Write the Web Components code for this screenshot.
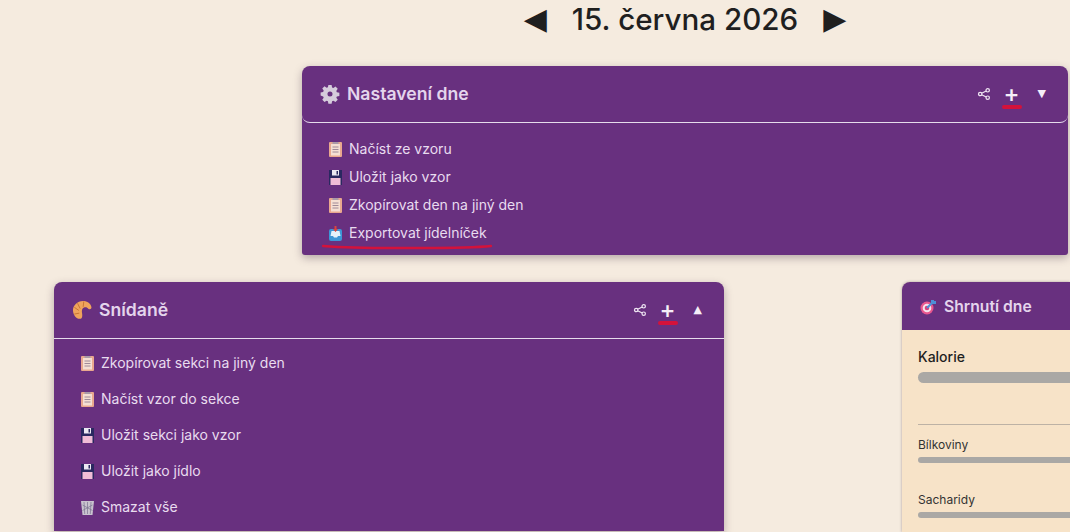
<!DOCTYPE html>
<html lang="cs">
<head>
<meta charset="utf-8">
<title>Jídelníček</title>
<style>
  html, body { margin: 0; height: 532px; overflow: hidden; background: #f5ebdf; }
  body { font-family: Inter, "Liberation Sans", sans-serif; }
</style>
</head>
<body>
<app-page>
  <date-nav slot="date">15. června 2026</date-nav>

  <app-card slot="settings" heading="Nastavení dne" compact>
    <app-icon slot="icon" name="gear"></app-icon>
    <menu-item icon="clipboard">Načíst ze vzoru</menu-item>
    <menu-item icon="floppy">Uložit jako vzor</menu-item>
    <menu-item icon="clipboard">Zkopírovat den na jiný den</menu-item>
    <menu-item icon="inbox">Exportovat jídelníček</menu-item>
    <red-stroke slot="overlay" style="left:20px;top:177px;width:170px" d="M1 3C40 6 70 5 100 5S150 5 169 3"></red-stroke>
  </app-card>

  <app-card slot="meal" heading="Snídaně" flipped>
    <app-icon slot="icon" name="croissant"></app-icon>
    <menu-item icon="clipboard" tall>Zkopírovat sekci na jiný den</menu-item>
    <menu-item icon="clipboard" tall>Načíst vzor do sekce</menu-item>
    <menu-item icon="floppy" tall>Uložit sekci jako vzor</menu-item>
    <menu-item icon="floppy" tall>Uložit jako jídlo</menu-item>
    <menu-item icon="trash" tall>Smazat vše</menu-item>
  </app-card>

  <summary-card slot="summary" heading="Shrnutí dne">
    <macro-bar label="Kalorie" large></macro-bar>
    <macro-bar label="Bílkoviny"></macro-bar>
    <macro-bar label="Sacharidy"></macro-bar>
  </summary-card>
</app-page>

<script>
  const icons = {
    gear: `<svg viewBox="0 0 20 20"><path fill="#d5cbdb" fill-rule="evenodd" d="M8.200 0h3.600l.5 2.800 1.500.6 2.300-1.600 2.500 2.500-1.600 2.300.6 1.500 2.800.5v3.600l-2.800.5-.6 1.500 1.600 2.300-2.500 2.500-2.300-1.600-1.500.6-.5 2.800H8.200l-.5-2.800-1.500-.6-2.300 1.600-2.500-2.500 1.600-2.300-.6-1.500L-.4 11.800V8.200l2.800-.5.6-1.500-1.600-2.300 2.500-2.500 2.300 1.600 1.500-.6zM10 7.200a2.800 2.800 0 1 0 0 5.600 2.800 2.800 0 0 0 0-5.600z"/></svg>`,
    clipboard: `<svg viewBox="0 0 13 15"><rect x="0" y="0" width="13" height="15" rx="1" fill="#e9a88e"/><rect x="2" y="2" width="9" height="11.500" fill="#f5dfd3"/><path stroke="#a08a98" stroke-width="1" d="M3.500 5h6M3.500 7.500h6M3.500 10h6"/><rect x="3.500" y="0" width="6" height="2" fill="#a99aa8"/></svg>`,
    floppy: `<svg viewBox="0 0 13 15"><rect x="0" y="0" width="13" height="15" fill="#2a2860"/><rect x="3" y="0" width="7" height="5.500" fill="#ece8f2"/><rect x="7.500" y="1" width="1.500" height="3.500" fill="#2a2860"/><rect x="1.500" y="8" width="10" height="7" fill="#f0bcd6"/></svg>`,
    inbox: `<svg viewBox="0 0 13 15"><rect x="0" y="3" width="13" height="12" rx="2" fill="#3d97d6"/><path fill="#e4f2fb" d="M2.500 5h8l1 5H9l-1 1.500H5L4 10H1.500z"/><path fill="#d9453f" d="M5.500 0h2v3H9L6.500 6 4 3h1.500z"/></svg>`,
    trash: `<svg viewBox="0 0 13 15"><path fill="#c9c3cf" d="M0 1h13l-1.500 14h-10z"/><path stroke="#7b7390" stroke-width=".7" d="M3 2l.7 12M6.500 2v12M10 2l-.7 12M1.500 5l10 5.500M11.500 5l-10 5.500"/></svg>`,
    croissant: `<svg viewBox="0 0 20 20"><path fill="#efa45c" d="M0 11C-.5 5 5 0 11 0c5 0 9 3 9.500 7 .2 2-2 2.800-3.500 1.500-1.700-1.500-3-2-4.800-1.300-2 .8-2.700 3-2.200 5.800.5 2.800.6 6-1.500 6.700C4 20.500.5 16 0 11z"/><path stroke="#c56f30" stroke-width="1" fill="none" d="M5 2.500l3 6M1.500 7l5 3.500M12 .5L11.300 6.500M1.500 14.500L7 13.500"/></svg>`,
    target: `<svg viewBox="0 0 16 16"><circle cx="7" cy="9" r="6.500" fill="#e8578f"/><circle cx="7" cy="9" r="4.300" fill="#f6e3ec"/><circle cx="7" cy="9" r="2.300" fill="#d8407c"/><path stroke="#4d8fd6" stroke-width="2.200" d="M7 9l6-6"/><path fill="#4d8fd6" d="M11 1h3v1h2v3h-3l-2-1z"/></svg>`,
    share: `<svg viewBox="0 0 12 12" fill="none" stroke="#efe6f3" stroke-width="1.200"><circle cx="2.200" cy="6" r="1.700"/><circle cx="9.700" cy="2.300" r="1.700"/><circle cx="9.700" cy="9.700" r="1.700"/><path d="M3.700 5.200l4.500-2.200M3.700 6.800l4.500 2.200"/></svg>`
  };

  class AppIcon extends HTMLElement {
    constructor() {
      super();
      this.attachShadow({ mode: "open" }).innerHTML = `
        <style>
          :host { display: inline-flex; width: var(--icon-w, 18px); height: var(--icon-h, 18px); flex: none; }
          svg { width: 100%; height: 100%; overflow: visible; display: block; }
        </style>
        ${icons[this.getAttribute("name")] || ""}`;
    }
  }

  class AppPage extends HTMLElement {
    constructor() {
      super();
      this.attachShadow({ mode: "open" }).innerHTML = `
        <style>
          :host { display: block; width: 1070px; height: 532px; overflow: hidden; }
          .top { display: flex; flex-direction: column; gap: 28px; width: 766px; margin-left: 302px; }
          .row { display: flex; gap: 178px; margin: 27px 0 0 54px; align-items: flex-start; }
        </style>
        <div class="top"><slot name="date"></slot><slot name="settings"></slot></div>
        <div class="row"><slot name="meal"></slot><slot name="summary"></slot></div>`;
    }
  }

  class DateNav extends HTMLElement {
    constructor() {
      super();
      this.attachShadow({ mode: "open" }).innerHTML = `
        <style>
          :host { display: flex; justify-content: center; align-items: center; gap: 25px; height: 38px; color: #1f1f1f; }
          .date { font: 500 29.6px/38px Inter, sans-serif; }
          .arrow { font: 30px/38px "DejaVu Sans", sans-serif; }
        </style>
        <span class="arrow">◀</span><span class="date"><slot></slot></span><span class="arrow">▶</span>`;
    }
  }

  class AppCard extends HTMLElement {
    constructor() {
      super();
      const arrow = this.hasAttribute("flipped") ? "▲" : "▼";
      this.attachShadow({ mode: "open" }).innerHTML = `
        <style>
          :host { display: block; position: relative; flex: none; width: 670px; background: #68307f; border-radius: 8px 8px 0 0; box-shadow: 0 3px 8px rgba(60, 40, 60, .35); color: #e8dcef; }
          :host([compact]) { width: 766px; border-radius: 8px 8px 3px 3px; }
          header { display: flex; align-items: center; gap: 8px; height: 56px; padding: 0 22px 0 19px; border-bottom: 1px solid #e6dcec; }
          :host([compact]) header { border-radius: 0 0 8px 8px; }
          h2 { margin: 0; flex: 1; font: 600 17.6px/24px Inter, sans-serif; color: #e4d5ec; }
          .actions { display: flex; align-items: center; gap: 15px; }
          .share { --icon-w: 12px; --icon-h: 12px; margin: -1px -1px 0 0; }
          .plus { font: 500 24px/22px Inter, sans-serif; color: #f5eef8; position: relative; }
          .plus::after { content: ""; position: absolute; left: -2px; right: -2px; bottom: -4px; height: 4px; border-radius: 2px; background: #d3123b; }
          .toggle { font: 11px/14px "DejaVu Sans", sans-serif; color: #f5eef8; margin-left: 3px; }
          .body { display: flex; flex-direction: column; padding: 12px 27px 8px; }
          :host(:not([compact])) .body { padding: 6px 27px; }
        </style>
        <header>
          <slot name="icon"></slot>
          <h2>${this.getAttribute("heading")}</h2>
          <div class="actions">
            <app-icon class="share" name="share"></app-icon>
            <span class="plus">+</span>
            <span class="toggle">${arrow}</span>
          </div>
        </header>
        <div class="body"><slot></slot></div>
        <slot name="overlay"></slot>`;
    }
  }

  class MenuItem extends HTMLElement {
    constructor() {
      super();
      this.attachShadow({ mode: "open" }).innerHTML = `
        <style>
          :host { display: flex; align-items: center; gap: 7px; height: 28px; font: 400 14px/20px Inter, sans-serif; color: #e8dcef; }
          :host([tall]) { height: 36px; }
          app-icon { --icon-w: 13px; --icon-h: 15px; }
        </style>
        <app-icon name="${this.getAttribute("icon")}"></app-icon><slot></slot>`;
    }
  }

  class RedStroke extends HTMLElement {
    constructor() {
      super();
      this.attachShadow({ mode: "open" }).innerHTML = `
        <style>
          :host { position: absolute; display: block; height: 8px; }
          svg { display: block; width: 100%; height: 100%; }
        </style>
        <svg viewBox="0 0 170 8" preserveAspectRatio="none"><path d="${this.getAttribute("d")}" fill="none" stroke="#d3123b" stroke-width="2.500" stroke-linecap="round"/></svg>`;
    }
  }

  class SummaryCard extends HTMLElement {
    constructor() {
      super();
      this.attachShadow({ mode: "open" }).innerHTML = `
        <style>
          :host { display: block; flex: none; width: 168px; height: 250px; background: #f7e3c8; border-radius: 8px 0 0 0; box-shadow: 0 0 3px rgba(60, 40, 60, .4); overflow: hidden; }
          header { display: flex; align-items: center; gap: 8px; height: 48px; padding: 1px 0 0 18px; box-sizing: border-box; background: #68307f; }
          app-icon { --icon-w: 16px; --icon-h: 16px; }
          h2 { margin: 0; font: 600 15.7px/22px Inter, sans-serif; color: #e4d5ec; white-space: nowrap; }
          .body { padding: 17px 0 0 16px; }
        </style>
        <header><app-icon name="target"></app-icon><h2>${this.getAttribute("heading")}</h2></header>
        <div class="body"><slot></slot></div>`;
    }
  }

  class MacroBar extends HTMLElement {
    constructor() {
      super();
      this.attachShadow({ mode: "open" }).innerHTML = `
        <style>
          :host { display: block; height: 55px; font: 400 12px/16px Inter, sans-serif; color: #333; }
          :host([large]) { height: 77px; margin-bottom: 12px; border-bottom: 1px solid #bdb2a5; font: 500 14px/20px Inter, sans-serif; color: #1f1f1f; }
          .bar { height: 6px; margin-top: 4px; border-radius: 3px 0 0 3px; background: #aaa8a5; }
          :host([large]) .bar { height: 11px; margin-top: 5px; border-radius: 6px 0 0 6px; }
        </style>
        <div>${this.getAttribute("label")}</div><div class="bar"></div>`;
    }
  }

  customElements.define("app-icon", AppIcon);
  customElements.define("app-page", AppPage);
  customElements.define("date-nav", DateNav);
  customElements.define("app-card", AppCard);
  customElements.define("menu-item", MenuItem);
  customElements.define("red-stroke", RedStroke);
  customElements.define("summary-card", SummaryCard);
  customElements.define("macro-bar", MacroBar);
</script>
</body>
</html>
